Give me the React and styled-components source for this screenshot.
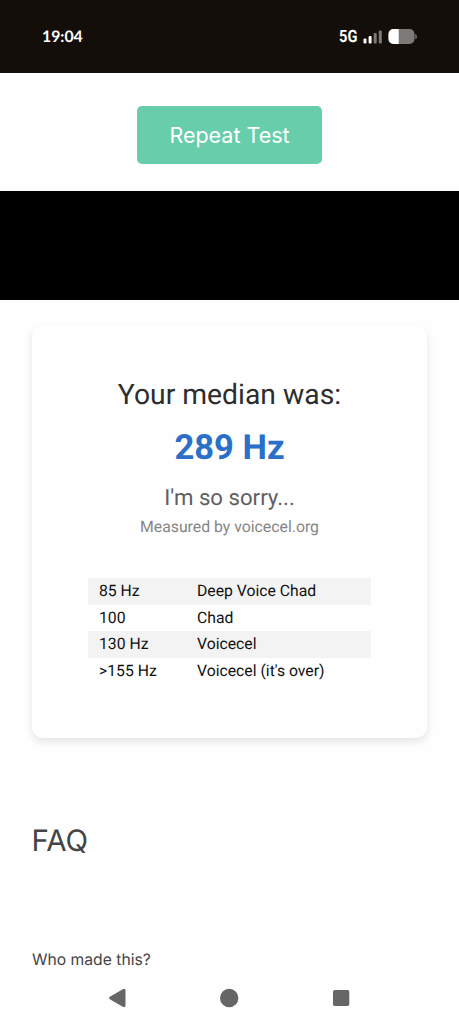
import styled, { createGlobalStyle } from "styled-components";

const GlobalStyle = createGlobalStyle`
  * {
    box-sizing: border-box;
  }

  body {
    margin: 0;
    background: #fefefe;
    font-family: Roboto, "Liberation Sans", sans-serif;
    text-rendering: geometricPrecision;
  }
`;

const Screen = styled.div`
  display: flex;
  flex-direction: column;
  height: 1024px;
  overflow: hidden;
`;

const StatusBar = styled.header`
  display: flex;
  flex-shrink: 0;
  align-items: center;
  justify-content: space-between;
  height: 73px;
  padding: 0 42px;
  background: #130e09;
  color: #fff;
`;

const Clock = styled.span`
  font-family: Lato, sans-serif;
  font-size: 15.8px;
  font-weight: 700;
  line-height: 20px;
`;

const StatusIcons = styled.div`
  display: flex;
  align-items: center;
  gap: 6px;
`;

const Network = styled.span`
  width: 18px;
  font-size: 17px;
  font-weight: 700;
  line-height: 20px;
  transform: scaleX(0.86);
  transform-origin: left;
`;

const Actions = styled.section`
  display: flex;
  flex-shrink: 0;
  justify-content: center;
  height: 118px;
  padding-top: 33px;
`;

const RepeatButton = styled.button`
  width: 185px;
  height: 58px;
  padding: 0;
  border: 0;
  border-radius: 5px;
  background: #67cdaa;
  color: #fff;
  font-family: Inter, sans-serif;
  font-size: 21.5px;
  font-weight: 400;
`;

const Recording = styled.div`
  flex-shrink: 0;
  height: 109px;
  background: #000;
`;

const Card = styled.section`
  display: flex;
  flex-direction: column;
  flex-shrink: 0;
  align-items: center;
  height: 413px;
  margin: 25px 32px 0;
  padding-top: 52px;
  border-radius: 11px;
  background: #fefefe;
  box-shadow: 0 4px 9px rgba(0, 0, 0, 0.1);
`;

const Line = styled.div`
  color: ${(props) => props.$color};
  font-size: ${(props) => props.$size}px;
  font-weight: ${(props) => (props.$bold ? 700 : 400)};
  line-height: ${(props) => props.$height}px;
  white-space: nowrap;
`;

const Scale = styled.div`
  width: 283px;
  margin-top: 37px;
`;

const ScaleRow = styled.div`
  display: grid;
  grid-template-columns: 98px 1fr;
  align-items: center;
  height: 26.5px;
  padding: 0 0 1px 11px;
  color: #111;
  font-size: 15.75px;

  &:nth-child(odd) {
    background: #f3f3f3;
  }
`;

const Faq = styled.section`
  flex: 1;
  padding: 83px 32px 0;
  color: #444;
  font-family: Inter, sans-serif;
`;

const FaqTitle = styled.h2`
  margin: 0 0 0 -0.5px;
  font-size: 29.5px;
  font-weight: 400;
  line-height: 40px;
`;

const Question = styled.p`
  margin: 87px 0 0;
  font-size: 15.7px;
  line-height: 24px;
`;

const NavBar = styled.nav`
  display: flex;
  flex-shrink: 0;
  justify-content: center;
  height: 38px;
`;

const ranges = [
  { hz: "85 Hz", label: "Deep Voice Chad" },
  { hz: "100", label: "Chad" },
  { hz: "130 Hz", label: "Voicecel" },
  { hz: ">155 Hz", label: "Voicecel (it's over)" },
];

const SignalIcon = () => (
  <svg width="19" height="14" viewBox="0 0 19 14">
    <rect x="0.5" y="8.5" width="3" height="5" rx="1" fill="#fff" />
    <rect x="5.6" y="6" width="3" height="7.5" rx="1" fill="#fff" />
    <rect x="10.7" y="3" width="3" height="10.5" rx="1" fill="#7d7976" />
    <rect x="15.8" y="0.5" width="3" height="13" rx="1" fill="#7d7976" />
  </svg>
);

const BatteryIcon = () => (
  <svg width="29" height="15" viewBox="0 0 29 15">
    <rect x="0.5" width="26" height="15" rx="5" fill="#7d7976" />
    <path
      d="M5.5 0H10.7V15H5.5A5 5 0 0 1 0.5 10V5A5 5 0 0 1 5.5 0Z"
      fill="#fff"
    />
    <path d="M27.2 5A2 2 0 0 1 28.7 7.3A2 2 0 0 1 27.2 10Z" fill="#7d7976" />
  </svg>
);

const NavIcons = () => (
  <svg width="243" height="24" viewBox="0 0 243 24" fill="#666">
    <path d="M1.8 10.7L14.8 3.2Q17.5 2 17.5 4.8V19.2Q17.5 22 14.8 20.8L1.8 13.3Q0 12 1.8 10.7Z" />
    <circle cx="121.2" cy="12" r="9.2" />
    <rect x="225" y="4" width="16.3" height="16" rx="1.7" />
  </svg>
);

const App = () => {
  return (
    <Screen>
      <GlobalStyle />
      <StatusBar>
        <Clock>19:04</Clock>
        <StatusIcons>
          <Network>5G</Network>
          <SignalIcon />
          <BatteryIcon />
        </StatusIcons>
      </StatusBar>
      <Actions>
        <RepeatButton>Repeat Test</RepeatButton>
      </Actions>
      <Recording />
      <Card>
        <Line $size={28.3} $height={36} $color="#2d2d2d">
          Your median was:
        </Line>
        <Line $size={34.6} $height={71} $color="#2a70c8" $bold>
          289 Hz
        </Line>
        <Line $size={22.2} $height={29} $color="#5f5f5f">
          I'm so sorry...
        </Line>
        <Line $size={15.8} $height={28} $color="#858585">
          Measured by voicecel.org
        </Line>
        <Scale>
          {ranges.map(({ hz, label }) => (
            <ScaleRow key={hz}>
              <span>{hz}</span>
              <span>{label}</span>
            </ScaleRow>
          ))}
        </Scale>
      </Card>
      <Faq>
        <FaqTitle>FAQ</FaqTitle>
        <Question>Who made this?</Question>
      </Faq>
      <NavBar>
        <NavIcons />
      </NavBar>
    </Screen>
  );
};

export default App;
